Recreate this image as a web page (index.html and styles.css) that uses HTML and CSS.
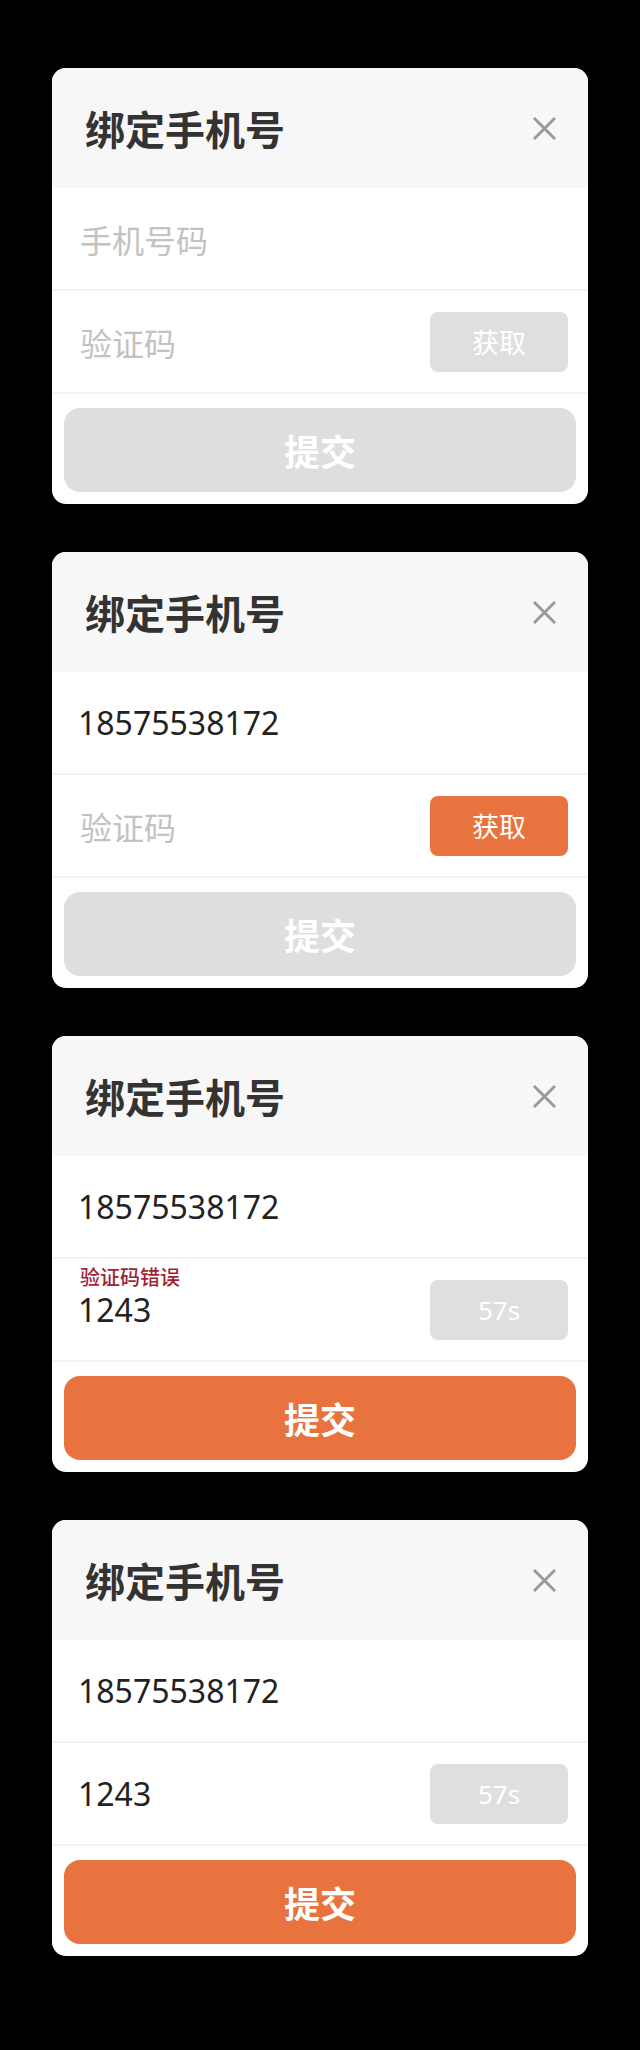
FILE: index.html
```html
<!DOCTYPE html>
<html lang="zh-CN">
<head>
<meta charset="utf-8">
<title>绑定手机号</title>
<link rel="stylesheet" href="styles.css">
</head>
<body>
<div class="page">

  <section class="card">
    <header class="card-head">
      <h2 class="title">绑定手机号</h2>
      <svg class="close" viewBox="0 0 24 24" width="24" height="24"><path d="M1 1 L23 23 M23 1 L1 23" /></svg>
    </header>
    <div class="row"><span class="field placeholder">手机号码</span></div>
    <div class="row"><span class="field placeholder">验证码</span><span class="code-btn">获取</span></div>
    <div class="submit">提交</div>
  </section>

  <section class="card">
    <header class="card-head">
      <h2 class="title">绑定手机号</h2>
      <svg class="close" viewBox="0 0 24 24" width="24" height="24"><path d="M1 1 L23 23 M23 1 L1 23" /></svg>
    </header>
    <div class="row"><span class="field value">18575538172</span></div>
    <div class="row"><span class="field placeholder">验证码</span><span class="code-btn active">获取</span></div>
    <div class="submit">提交</div>
  </section>

  <section class="card">
    <header class="card-head">
      <h2 class="title">绑定手机号</h2>
      <svg class="close" viewBox="0 0 24 24" width="24" height="24"><path d="M1 1 L23 23 M23 1 L1 23" /></svg>
    </header>
    <div class="row"><span class="field value">18575538172</span></div>
    <div class="row"><span class="error">验证码错误</span><span class="field value">1243</span><span class="code-btn count">57s</span></div>
    <div class="submit active">提交</div>
  </section>

  <section class="card">
    <header class="card-head">
      <h2 class="title">绑定手机号</h2>
      <svg class="close" viewBox="0 0 24 24" width="24" height="24"><path d="M1 1 L23 23 M23 1 L1 23" /></svg>
    </header>
    <div class="row"><span class="field value">18575538172</span></div>
    <div class="row"><span class="field value">1243</span><span class="code-btn count">57s</span></div>
    <div class="submit active">提交</div>
  </section>

</div>
</body>
</html>
```
FILE: styles.css
```css
html, body {
  margin: 0;
  padding: 0;
  background: #000;
}
body {
  font-family: "Noto Sans", "Noto Sans CJK SC", sans-serif;
}
.page {
  display: flex;
  flex-direction: column;
  align-items: center;
  gap: 48px;
  padding-top: 68px;
}
.card {
  width: 536px;
  background: #fff;
  border-radius: 14px;
  overflow: hidden;
  display: flex;
  flex-direction: column;
}
.card-head {
  height: 120px;
  background: #f7f7f7;
  display: flex;
  align-items: center;
  justify-content: space-between;
  padding: 0 32px 0 33px;
}
.title {
  margin: 0;
  font-family: "Noto Sans CJK SC", sans-serif;
  font-size: 40px;
  font-weight: 700;
  color: #333;
  line-height: 1;
}
.close {
  width: 23px;
  height: 23px;
  fill: none;
  stroke: #999;
  stroke-width: 3;
}
.row {
  position: relative;
  height: 101px;
  border-bottom: 2px solid #f3f3f3;
  display: flex;
  align-items: center;
  justify-content: space-between;
  padding: 0 20px 0 28px;
}
.field {
  font-size: 32px;
  line-height: 1;
}
.placeholder {
  font-family: "Noto Sans CJK SC", sans-serif;
  color: #c2c2c2;
}
.value {
  color: #222;
  margin-left: -2px;
}
.error {
  position: absolute;
  left: 28px;
  top: 8px;
  font-family: "Noto Sans CJK SC", sans-serif;
  font-size: 20px;
  font-weight: 500;
  color: #a21f38;
  line-height: 1;
}
.code-btn {
  width: 138px;
  height: 60px;
  border-radius: 8px;
  background: #dfdfdf;
  color: #fff;
  display: flex;
  align-items: center;
  justify-content: center;
  font-family: "Noto Sans CJK SC", sans-serif;
  font-size: 27px;
}
.code-btn.active {
  background: #e8733e;
}
.code-btn.count {
  font-family: "Noto Sans", sans-serif;
  font-size: 26px;
}
.submit {
  margin: 14px 12px 12px;
  height: 84px;
  border-radius: 16px;
  background: #dedede;
  color: #fff;
  display: flex;
  align-items: center;
  justify-content: center;
  font-family: "Noto Sans CJK SC", sans-serif;
  font-size: 36px;
  font-weight: 700;
}
.submit.active {
  background: #e8733e;
}
```
